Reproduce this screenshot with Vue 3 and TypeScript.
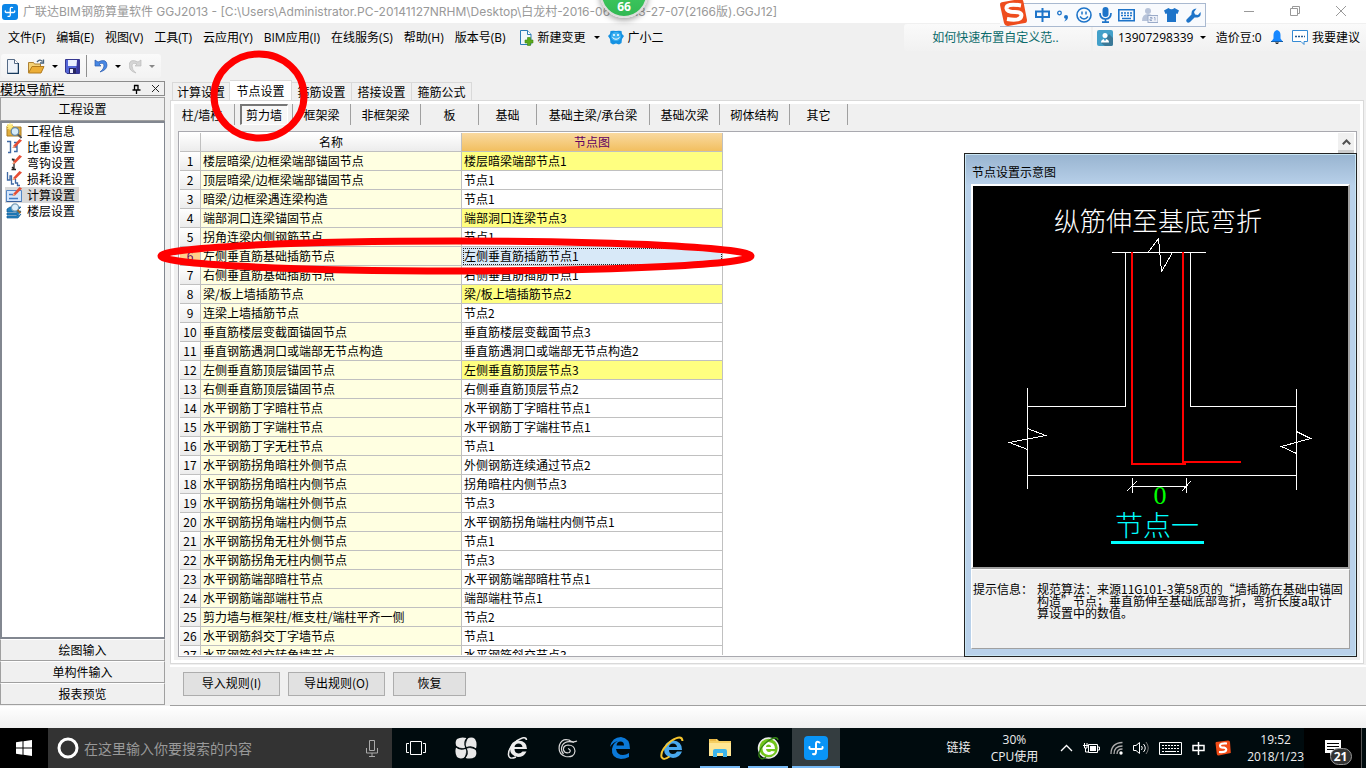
<script setup lang="ts">
import { ref } from 'vue'

interface NodeRow { name: string; node: string; changed?: boolean }

const menus = ['文件(F)', '编辑(E)', '视图(V)', '工具(T)', '云应用(Y)', 'BIM应用(I)', '在线服务(S)', '帮助(H)', '版本号(B)']
const navItems = ['工程信息', '比重设置', '弯钩设置', '损耗设置', '计算设置', '楼层设置']
const navFooter = ['绘图输入', '单构件输入', '报表预览']
const tabs = ['计算设置', '节点设置', '箍筋设置', '搭接设置', '箍筋公式']
const members = [
  { label: '柱/墙柱', size: 'm' }, { label: '剪力墙', size: 's' }, { label: '框架梁', size: 's' },
  { label: '非框架梁', size: 'l' }, { label: '板', size: 's' }, { label: '基础', size: 's' },
  { label: '基础主梁/承台梁', size: 'xl' }, { label: '基础次梁', size: 'l' },
  { label: '砌体结构', size: 'l' }, { label: '其它', size: 's' },
]
const rows: NodeRow[] = [
  { name: '楼层暗梁/边框梁端部锚固节点', node: '楼层暗梁端部节点1', changed: true },
  { name: '顶层暗梁/边框梁端部锚固节点', node: '节点1' },
  { name: '暗梁/边框梁遇连梁构造', node: '节点1' },
  { name: '端部洞口连梁锚固节点', node: '端部洞口连梁节点3', changed: true },
  { name: '拐角连梁内侧钢筋节点', node: '节点1' },
  { name: '左侧垂直筋基础插筋节点', node: '左侧垂直筋插筋节点1' },
  { name: '右侧垂直筋基础插筋节点', node: '右侧垂直筋插筋节点1' },
  { name: '梁/板上墙插筋节点', node: '梁/板上墙插筋节点2', changed: true },
  { name: '连梁上墙插筋节点', node: '节点2' },
  { name: '垂直筋楼层变截面锚固节点', node: '垂直筋楼层变截面节点3' },
  { name: '垂直钢筋遇洞口或端部无节点构造', node: '垂直筋遇洞口或端部无节点构造2' },
  { name: '左侧垂直筋顶层锚固节点', node: '左侧垂直筋顶层节点3', changed: true },
  { name: '右侧垂直筋顶层锚固节点', node: '右侧垂直筋顶层节点2' },
  { name: '水平钢筋丁字暗柱节点', node: '水平钢筋丁字暗柱节点1' },
  { name: '水平钢筋丁字端柱节点', node: '水平钢筋丁字端柱节点1' },
  { name: '水平钢筋丁字无柱节点', node: '节点1' },
  { name: '水平钢筋拐角暗柱外侧节点', node: '外侧钢筋连续通过节点2' },
  { name: '水平钢筋拐角暗柱内侧节点', node: '拐角暗柱内侧节点3' },
  { name: '水平钢筋拐角端柱外侧节点', node: '节点3' },
  { name: '水平钢筋拐角端柱内侧节点', node: '水平钢筋拐角端柱内侧节点1' },
  { name: '水平钢筋拐角无柱外侧节点', node: '节点1' },
  { name: '水平钢筋拐角无柱内侧节点', node: '节点3' },
  { name: '水平钢筋端部暗柱节点', node: '水平钢筋端部暗柱节点1' },
  { name: '水平钢筋端部端柱节点', node: '端部端柱节点1' },
  { name: '剪力墙与框架柱/框支柱/端柱平齐一侧', node: '节点2' },
  { name: '水平钢筋斜交丁字墙节点', node: '节点1' },
  { name: '水平钢筋斜交转角墙节点', node: '水平钢筋斜交节点3' },
]
const activeNav = ref(4)
const activeTab = ref(1)
const activeMember = ref(1)
const activeRow = ref(5)
const query = ref('')
</script>

<template>
  <div class="desktop">
    <header class="titlebar">
      <svg class="app-icon" width="16" height="16" viewBox="0 0 16 16"><rect width="16" height="16" rx="3" fill="#0c86e8" /><path d="M10.500 3.500Q8.300 2.800 8.300 5V10.500Q8.300 13 6 12.300M3.300 7Q3 8.500 4.500 8.500H11.500Q13 8.500 12.700 7" fill="none" stroke="#fff" stroke-width="1.300" stroke-linecap="round" /></svg>
      <h1>广联达BIM钢筋算量软件 GGJ2013 - [C:\Users\Administrator.PC-20141127NRHM\Desktop\白龙村-2016-06-13-13-27-07(2166版).GGJ12]</h1>
      <div class="window-controls">
        <button aria-label="最小化"><svg width="12" height="12"><path d="M1 6.500H11" stroke="#999" /></svg></button>
        <button aria-label="还原"><svg width="12" height="12"><path d="M1.500 3.500h7v7h-7zM3.500 3.500v-2h7v7h-2" fill="none" stroke="#999" /></svg></button>
        <button aria-label="关闭"><svg width="12" height="12"><path d="M1 1L11 11M11 1L1 11" stroke="#999" /></svg></button>
      </div>
    </header>

    <nav class="menubar">
      <button v-for="m in menus" :key="m" class="menu">{{ m }}</button>
      <button class="menu with-icon new-change">
        <svg width="15" height="17" viewBox="0 0 15 17"><path d="M1.500 1.500h7l3.500 4v10H1.500z" fill="#f2f8fc" stroke="#2b7cb8" /><path d="M8.500 1.500v4H12" fill="#fff" stroke="#2b7cb8" /><path d="M8.500 8.500h3v2.500H14v3h-2.500v2.500h-3V14H6v-3h2.500z" fill="#5cab1c" stroke="#3d8710" stroke-width=".6" /></svg>
        新建变更<i class="caret"></i>
      </button>
      <button class="menu with-icon">
        <svg width="16" height="15" viewBox="0 0 16 15"><path d="M2.500 1Q5 .5 8 1 11 .5 13.500 1L14 4 16 6 14 9 13.500 13 11 14.500 8 13.500 5 14.500 2.500 13 2 9 0 6 2 4z" fill="#1692e2" /><ellipse cx="8" cy="6.500" rx="5" ry="4.500" fill="#3fb2f2" /><circle cx="6" cy="5" r="1" fill="#fff" /><circle cx="10" cy="5" r="1" fill="#fff" /><path d="M4.500 7.500q3.500 3.500 7 0" fill="none" stroke="#fff" /></svg>
        广小二
      </button>
      <div class="promo"><a href="#help">如何快速布置自定义范..</a></div>
      <div class="account">
        <button class="user"><svg width="16" height="16" viewBox="0 0 16 16"><rect width="16" height="16" rx="2" fill="#43a0c9" /><path d="M8 10l4-6 4 4v6q0 2-2 2H8l-4-3z" fill="#3b7997" /><circle cx="8" cy="5.500" r="2.500" fill="#fff" /><path d="M4 12.500q0-3.500 4-3.500t4 3.500z" fill="#fff" /><path d="M7 8h2v2l-1 1-1-1z" fill="#43a0c9" /></svg>13907298339<i class="caret"></i></button>
        <span>造价豆:0</span>
        <button aria-label="通知"><svg width="12" height="15" viewBox="0 0 12 15"><path d="M6 0Q9.500 1 9.500 5V8.500L12 12H0L2.500 8.500V5Q2.500 1 6 0z" fill="#1687ff" /><path d="M4 12.500h4q-2 3-4 0" fill="#111" /><path d="M0 11.500H12" stroke="#135da8" /></svg></button>
        <button class="suggest"><svg width="16" height="15" viewBox="0 0 16 15"><path d="M.5.500h15v11h-3.500v3l-3-3H.500z" fill="#fff" stroke="#368bd4" /><path d="M3 6.500H13" stroke="#235a91" stroke-width="1.500" stroke-dasharray="2 1" /></svg>我要建议</button>
      </div>
    </nav>

    <div class="toolbar-row">
      <div class="toolbar">
        <button aria-label="新建"><svg width="12" height="15" viewBox="0 0 12 15"><path d="M.5.500h7l4 4v10H.500z" fill="#eef3fa" stroke="#566b86" /><path d="M7.500.500v4h4" fill="#fff" stroke="#566b86" /><path d="M11.500 4v10.500H.500" fill="none" stroke="#173a5c" stroke-width="1.500" /></svg></button>
        <button class="tool-open" aria-label="打开"><svg width="17" height="15" viewBox="0 0 17 15"><path d="M.5 13.500V3.500h5l1 1.500h6v3" fill="#f5d276" stroke="#ad8135" /><path d="M.5 14l3.500-6.500h12L13 14z" fill="#ecae37" stroke="#b27b1d" /><path d="M9 3q3-3.500 5.500-.5M15.500.500v3.500h-3.500" fill="none" stroke="#48637c" stroke-width="1.300" /></svg><i class="caret"></i></button>
        <button class="tool-save" aria-label="保存"><svg width="15" height="15" viewBox="0 0 15 15"><path d="M.5.500h14v14H2L.5 13z" fill="#5467d8" stroke="#363790" /><path d="M3 1h9v6H3z" fill="#e9f0ff" /><path d="M12 1h2v13h-3z" fill="#37389c" /><path d="M4 9h7v5.500H4z" fill="#272760" /><path d="M5 10h3v4H5z" fill="#eef" /></svg></button>
        <button class="tool-undo" aria-label="撤销"><svg width="14" height="15" viewBox="0 0 14 15"><path d="M1 1v6h6L5 5q5-2 5 2 0 3-4 6 7-2 7-7Q12.500-1 4 3z" fill="#4788e5" stroke="#2859ae" stroke-width=".7" /></svg><i class="caret"></i></button>
        <button aria-label="重做" disabled><svg width="13" height="15" viewBox="0 0 13 15"><path d="M12 1v6H6l2-2Q3 3 3 7q0 4 4 7-7-2-7-8Q1-1 9 3z" fill="#d5d5d5" stroke="#bbb" stroke-width=".7" /></svg><i class="caret dim"></i></button>
      </div>
    </div>

    <div class="workspace">
      <aside class="sidebar">
        <div class="side-head"><h2>模块导航栏</h2>
          <button aria-label="固定"><svg width="9" height="10" viewBox="0 0 9 10"><path d="M2.500 1V5.500M6 1V5.500M2 1.500H6.500M.5 6H8.500M4.500 6V10" fill="none" stroke="#000" stroke-width="1.300" /></svg></button>
          <button aria-label="关闭导航"><svg width="9" height="9" viewBox="0 0 9 9"><path d="M1 1L8 8M8 1L1 8" stroke="#222" /></svg></button>
        </div>
        <button class="side-btn top">工程设置</button>
        <div class="tree">
          <button v-for="(n, i) in navItems" :key="n" class="tree-item" :class="{ on: i === activeNav }" @click="activeNav = i">
            <svg v-if="i === 0" width="16" height="16" viewBox="0 0 16 16"><path d="M1 3h6l1 1h7v9H1z" fill="#e1ae3c" stroke="#a97b22" /><path d="M4 0v7M.5 3.500h7M1.500 1l5 5M6.500 1l-5 5" stroke="#ffea78" stroke-width="1.200" /><circle cx="9" cy="8.500" r="3.800" fill="#d5ebfa" stroke="#6688a4" stroke-width="1.300" /><path d="M12 11.500l3.500 3.500" stroke="#555" stroke-width="2" /></svg>
            <svg v-else-if="i === 1" width="16" height="16" viewBox="0 0 16 16"><path d="M1 2.500H4.500V13.500H2M8 3.500h3v9H8M8.500 8H11" fill="none" stroke="#3f69a4" stroke-width="1.400" /><path d="M6.500 9L7.500 6.500 13.500 0 16 1.500 9 8.500z" fill="#e64d35" /><path d="M6.500 9l1-2.500L9 8z" fill="#f2bf91" /></svg>
            <svg v-else-if="i === 2" width="16" height="16" viewBox="0 0 16 16"><path d="M6 4.500H8V14.500M5.500 14.500H10M6 12L8 14M6.500 3.500v2" fill="none" stroke="#222" stroke-width="1.300" /><path d="M6.500 9L7.500 6.500 13.500 0 16 1.500 9 8.500z" fill="#e64d35" /><path d="M6.500 9l1-2.500L9 8z" fill="#f2bf91" /></svg>
            <svg v-else-if="i === 3" width="16" height="16" viewBox="0 0 16 16"><path d="M1.500 1v8H4V5h1.500v8H8M9.500 8v4h2v2.500H14" fill="none" stroke="#3f69a4" stroke-width="1.300" /><path d="M6.500 9L7.500 6.500 13.500 0 16 1.500 9 8.500z" fill="#e64d35" /><path d="M6.500 9l1-2.500L9 8z" fill="#f2bf91" /></svg>
            <svg v-else-if="i === 4" width="16" height="16" viewBox="0 0 16 16"><path d="M.5 3.500h15v11H.500z" fill="#d4e6fb" stroke="#5587c5" /><path d="M.5 14.500h15" stroke="#365f9c" /><path d="M3 7.500h4M3 11.500h9" stroke="#437cc4" stroke-width="1.500" /><path d="M6.500 9L7.500 6.500 13.500 0 16 1.500 9 8.500z" fill="#e64d35" /><path d="M6.500 9l1-2.500L9 8z" fill="#f2bf91" /></svg>
            <svg v-else width="16" height="16" viewBox="0 0 16 16"><path d="M1 6l3-2h11l-3 3v2l3-1-3 4v1l3-2-3 4H1v-2h10v-1H1v-2h10V9H1z" fill="#2383c2" stroke="#145d97" stroke-width=".7" /><circle cx="9" cy="4.500" r="3.600" fill="#dceffb" stroke="#7b9eb7" stroke-width="1.200" /><path d="M11.500 7l3 3" stroke="#9c672a" stroke-width="2" /></svg>
            <span>{{ n }}</span>
          </button>
        </div>
        <button v-for="n in navFooter" :key="n" class="side-btn">{{ n }}</button>
      </aside>

      <main class="main">
        <div class="tabs" role="tablist">
          <button v-for="(t, i) in tabs" :key="t" role="tab" :aria-selected="i === activeTab" :class="{ on: i === activeTab }" @click="activeTab = i">{{ t }}</button>
        </div>
        <section class="panel">
          <div class="panel-body">
            <div class="members">
              <div v-for="(m, i) in members" :key="m.label" class="member" :class="m.size">
                <button :class="{ on: i === activeMember }" @click="activeMember = i">{{ m.label }}</button>
              </div>
            </div>
            <div class="grid-frame">
              <div class="grid-scroll">
                <table>
                  <colgroup><col class="c-num"><col class="c-text"><col class="c-text"></colgroup>
                  <thead><tr><th></th><th>名称</th><th class="current">节点图</th></tr></thead>
                  <tbody>
                    <tr v-for="(r, i) in rows" :key="i" @click="activeRow = i">
                      <th scope="row" :class="{ current: i === activeRow }">{{ i + 1 }}</th>
                      <td class="name">{{ r.name }}</td>
                      <td :class="{ changed: r.changed, selected: i === activeRow }">{{ r.node }}</td>
                    </tr>
                  </tbody>
                </table>
              </div>
              <div class="scrollbar"><button aria-label="向上滚动"><svg width="9" height="6" viewBox="0 0 9 6"><path d="M.8 5.200L4.500 1.500 8.200 5.200" fill="none" stroke="#505050" stroke-width="2" /></svg></button></div>

              <section class="preview">
                <h3>节点设置示意图</h3>
                <div class="drawing">
                  <svg viewBox="0 0 373 381" role="img" aria-label="节点一">
                    <g fill="none" stroke="#fff" shape-rendering="crispEdges">
                      <path d="M138 66.500H232M174 66.500L184.500 52.500 187.500 85.500 198.500 66.500M151.500 66.500V220.500H53.500M216.500 66.500V220.500H322.500M53.500 202V303M322.500 203V304M53.500 289.500H322.500" />
                      <path d="M53.500 242.500L71.500 249.500 35.500 256.500 53.500 263.500M322.500 245.500L336.500 252.500 307.500 260.500 322.500 267.500" />
                      <path d="M158.500 292V307M212.500 292V307M158.500 300.500H212.500M152.500 305.500L162.500 295.500M207.500 305.500L216.500 295.500" />
                    </g>
                    <path d="M158 66V278H212M209 66V276H267" fill="none" stroke="#f00" stroke-width="2" />
                    <text x="184" y="45" class="cad white">纵筋伸至基底弯折</text>
                    <text x="186" y="318" class="cad green">0</text>
                    <text x="183" y="350" class="cad cyan">节点一</text>
                    <path d="M137 356.500H230" stroke="#0ff" stroke-width="3" />
                  </svg>
                </div>
                <div class="tip">
                  <span class="tip-label">提示信息：</span>
                  <p>规范算法：来源11G101-3第58页的“墙插筋在基础中锚固<br>构造”节点；垂直筋伸至基础底部弯折，弯折长度a取计<br>算设置中的数值。</p>
                </div>
              </section>
            </div>
          </div>
        </section>
        <div class="actions">
          <button>导入规则(I)</button><button>导出规则(O)</button><button class="short">恢复</button>
        </div>
      </main>
    </div>

    <div class="status-gap"></div>

    <footer class="taskbar">
      <button class="start" aria-label="开始"><svg width="16" height="16" viewBox="0 0 16 16"><path d="M0 2.200L6.500 1.300V7.500H0zM7.500 1.200L16 0V7.500H7.500zM0 8.500H6.500V14.700L0 13.800zM7.500 8.500H16V16L7.500 14.800z" fill="#fff" /></svg></button>
      <div class="search">
        <svg width="22" height="22" viewBox="0 0 22 22"><circle cx="11" cy="11" r="9" fill="none" stroke="#fff" stroke-width="3" /></svg>
        <input v-model="query" type="text" aria-label="搜索" placeholder="在这里输入你要搜索的内容">
        <svg width="12" height="17" viewBox="0 0 12 17"><path d="M3.500.500h5v10h-5zM.5 8v5H11.500V8M6 13v3.500M3 16.500H9" fill="none" stroke="#aaa" /></svg>
      </div>
      <div class="apps">
        <button class="std" aria-label="任务视图"><svg width="20" height="14" viewBox="0 0 20 14"><path d="M4.500.500h11v13h-11zM3 2.500H.500v9H3M17 2.500h2.500v9H17" fill="none" stroke="#fff" /></svg></button>
        <button class="mid" aria-label="风扇"><svg width="22" height="22" viewBox="0 0 22 22"><g fill="#e9e9e9"><path d="M11 10.500Q9.500 5 11.500 1 6-.5 2 2-.5 5 1.500 9.500 6 12 11 10.500z" /><path d="M11.500 11Q17 9.500 21 11.500 22.500 6 20 2 17-.5 12.500 1.500 10 6 11.500 11z" /><path d="M11 11.500Q12.500 17 10.500 21 16 22.500 20 20 22.500 17 20.500 12.500 16 10 11 11.500z" /><path d="M10.500 11Q5 12.500 1 10.500-.5 16 2 20 5 22.500 9.500 20.500 12 16 10.500 11z" /></g><path d="M11 11Q8 5 12.500 1M11 11Q17 8 21 12.500M11 11Q14 17 9.500 21M11 11Q5 14 1 9.500" fill="none" stroke="#000b0e" stroke-width="1.200" /></svg></button>
        <button class="mid" aria-label="浏览器"><svg width="22" height="24" viewBox="0 0 22 24"><path d="M19.500 15.500Q17 21 11 21 3 20 3 12.500 4 5 11.500 4.500 20 5 20 13H7.500M7.500 11Q8 7.500 11.500 7.500T15.500 11zM7.500 13q0 4 4 4.500 2.500 0 4-2h4" fill="#eee" fill-rule="evenodd" /><path d="M19.500 4Q19-1 9.500 5 1 12 1.500 19q.5 5 7.500 2" fill="none" stroke="#eee" stroke-width="1.500" /></svg></button>
        <button class="std" aria-label="搜索引擎"><svg width="20" height="20" viewBox="0 0 20 20"><path d="M19 3Q14 5 11 2 4 0 1.500 7q-2 9 6 11.500 9 1.500 9.500-5.500-.5-6-7-6-5 .5-4.500 5 1.500 4 6 2.500 2-2.500-1.500-4M16 4.500Q8 2 4.500 7 2 12 5.500 16" fill="none" stroke="#d9d9d9" stroke-width="1.200" /></svg></button>
        <button class="wide" aria-label="Edge"><svg width="20" height="22" viewBox="0 0 20 22"><path d="M0 10Q2 0 11 0q9 1 9 12H6q1 6 7 6 3 0 6-2v4q-4 2-8 2Q1 21 2 12 3 6 8 4 3 5 0 10zM6.500 8.500H14Q14 4.500 10.500 4.500T6.500 8.500z" fill="#0b79d8" fill-rule="evenodd" /></svg></button>
        <button class="std" aria-label="Internet Explorer"><svg width="24" height="24" viewBox="0 0 24 24"><path d="M22 15.500Q19.500 22 13 22 4 21 4 13 5 5 13 4.500 22 5 22 14H9Q9 18 13 18q2.500 0 4-2.500zM9 11h8q-.5-3.500-4-3.500T9 11z" fill="#48a8ed" fill-rule="evenodd" /><path d="M22.500 5Q22-2 11 5 0 14 1.500 21q2 4 8-.5" fill="none" stroke="#f5c52e" stroke-width="2" /></svg></button>
        <button class="open" aria-label="文件资源管理器"><svg width="22" height="18" viewBox="0 0 22 18"><path d="M0 0h8l2 2h12v15H0z" fill="#f6cf62" /><path d="M0 4h22v13H0z" fill="#ffe694" /><path d="M1 1h6" stroke="#dc9d24" /><path d="M4 18v-6q0-2 2-2h10q2 0 2 2v6h-4v-4H8v4z" fill="#3db5eb" /></svg></button>
        <button class="open" aria-label="360浏览器"><svg width="23" height="24" viewBox="0 0 23 24"><circle cx="11.500" cy="12" r="10" fill="#72c51c" stroke="#eee" stroke-width="1.500" /><path d="M18 15.500Q16 19 11.500 19 5.500 18 5.500 12.500T11.500 6Q18 6.500 18 13H9q.5 3 3 3 1.500 0 2.500-1zM9 11h5q0-2.500-2.500-2.500T9 11z" fill="#fff" fill-rule="evenodd" /><path d="M21 4Q20-1 11 5 1 13 2 20q2 5 7 1" fill="none" stroke="#338413" stroke-width="1.300" /></svg></button>
        <button class="open active" aria-label="广联达"><svg width="24" height="24" viewBox="0 0 24 24"><rect width="24" height="24" rx="4" fill="#0994f6" /><path d="M15.500 6.500Q12 4.500 12 8V15.500Q12 19 9 18M5.500 11Q5 13 7 13H17Q19 13 18.500 11" fill="none" stroke="#fff" stroke-width="2" stroke-linecap="round" /></svg></button>
      </div>
      <div class="tray">
        <span class="link">链接</span>
        <span class="two">30%<br>CPU使用</span>
        <svg width="13" height="8" viewBox="0 0 13 8"><path d="M1 7L6.500 1.500 12 7" fill="none" stroke="#fff" stroke-width="1.300" /></svg>
        <svg width="17" height="12" viewBox="0 0 17 12"><path d="M5.500 2.500h9v8h-9zM14.500 5h2v3h-2M0 3.500h5M1.500 1v5H4V1M2.500 6v4h3" fill="none" stroke="#fff" /><path d="M7 4h6v5H7z" fill="#fff" /></svg>
        <svg width="13" height="14" viewBox="0 0 13 14"><path d="M1 13Q1 2 12.500 1.500M4 13q0-8 8.500-8M7 13q0-5 5.500-5" fill="none" stroke="#aaa" stroke-width="1.300" /><circle cx="11" cy="12" r="1.700" fill="#fff" /></svg>
        <svg width="16" height="14" viewBox="0 0 16 14"><path d="M.5 4.500H3L6.500 1.500v11L3 9.500H.500zM8.500 5q1.500 2 0 4M10.500 3q3.500 4 0 8" fill="none" stroke="#fff" /><path d="M13 1q4.500 6 0 12" fill="none" stroke="#777" /></svg>
        <svg width="23" height="13" viewBox="0 0 23 13"><path d="M.5.500h22v12H.500z" fill="none" stroke="#fff" /><path d="M3 3.500H20M3 6.500H20" stroke="#fff" stroke-dasharray="2 1" /><path d="M3 9.500h2M6 9.500h11M18 9.500h2" stroke="#fff" /></svg>
        <svg width="13" height="13" viewBox="0 0 13 13"><path d="M1 3.500H12V8.500H1zM6.500 0V13" fill="none" stroke="#fff" stroke-width="1.500" /></svg>
        <svg width="16" height="16" viewBox="0 0 16 16"><path d="M1 2L13 .5Q15 .5 15 2l.8 11-12 2.500Q2 15.500 1.800 14L.5 3z" fill="#f04b16" /><path d="M12 3.500Q5 3 5 5.500T9 7.500q3 1 2 3T4 12" fill="none" stroke="#fff" stroke-width="2.200" /></svg>
        <span class="two clock">19:52<br>2018/1/23</span>
      </div>
      <button class="notice" aria-label="21条通知"><svg width="17" height="17" viewBox="0 0 17 17"><path d="M0 0h16v13H8l-3 3v-3H0z" fill="#fff" /><path d="M2 3.500h12M2 6.500h12M2 9.500h7" stroke="#000" /></svg><span>21</span></button>
    </footer>

    <div class="speed-ball"><span>66</span></div>
    <div class="ime">
      <svg class="ime-logo" width="28" height="28" viewBox="0 0 28 28"><path d="M0 6Q0 3 3 3L20 0q3 0 3.500 3L27 21q0 3-2 3L8 27q-3 0-4-3z" fill="#ee4c1d" /><path d="M21 6.500Q6 4 6.500 9.500 7 13 15 13t6 5q-2 4-14 2" fill="none" stroke="#fff" stroke-width="4" /></svg>
      <svg width="15" height="14" viewBox="0 0 15 14"><path d="M1 3.500H14V9H1zM7.500 0V14" fill="none" stroke="#1e74c9" stroke-width="2" /></svg>
      <svg width="13" height="13" viewBox="0 0 13 13"><circle cx="3.500" cy="4" r="1.800" fill="none" stroke="#1e74c9" stroke-width="1.300" /><path d="M8 8q0-2 2-2t2 2q0 3-4 4.500 2-1.500 1.500-3Q8 9.500 8 8" fill="#1e74c9" /></svg>
      <svg width="16" height="16" viewBox="0 0 16 16"><circle cx="8" cy="8" r="7" fill="none" stroke="#1e74c9" stroke-width="1.600" /><path d="M6 4.500v3M10 4.500v3M4 9.500q4 5 8 0" fill="none" stroke="#1e74c9" stroke-width="1.500" /></svg>
      <svg width="13" height="16" viewBox="0 0 13 16"><rect x="3.500" y="0" width="6" height="10" rx="3" fill="#1e74c9" /><path d="M1 6q0 6 5.500 6T12 6M6.500 12v3M3 15.200h7" fill="none" stroke="#1e74c9" stroke-width="1.700" /></svg>
      <svg width="17" height="13" viewBox="0 0 17 13"><path d="M.8.800h15.400v11H.8z" fill="none" stroke="#1e74c9" stroke-width="1.600" /><path d="M3 4h11M3 6.500h11" stroke="#1e74c9" stroke-width="1.500" stroke-dasharray="2 1" /><path d="M4 9.500h9" stroke="#1e74c9" stroke-width="1.500" /></svg>
      <svg width="16" height="16" viewBox="0 0 16 16"><circle cx="6" cy="4" r="3" fill="#b7c3d9" /><path d="M0 14q0-7 6-7 3 0 5 2v5z" fill="#b7c3d9" /><rect x="6" y="8.500" width="10" height="7" fill="#eef1f8" stroke="#9aabc9" /><path d="M8 10.500h2v1.500H8v1.500h2M12 10.500h1v3" fill="none" stroke="#9aabc9" /></svg>
      <svg width="15" height="14" viewBox="0 0 15 14"><path d="M4.500 0Q7.500 2.500 10.500 0L15 2.500 13.500 6 12 5.500V14H3V5.500L1.500 6 0 2.500z" fill="#1e74c9" /></svg>
      <svg width="15" height="15" viewBox="0 0 15 15"><path d="M10.500.500L8 4l1 2.500 3 .5L14.500 4Q15.500 8.500 11.500 9.500H8.500L4 14Q2 15.500.8 14T1 11L5.500 6.500Q5 1 10.500.500" fill="#1e74c9" /></svg>
    </div>
    <svg class="mark ring" width="98" height="92" viewBox="0 0 98 92" aria-hidden="true"><ellipse cx="49" cy="46" rx="45" ry="42" fill="none" stroke="#f00" stroke-width="7" /></svg>
    <svg class="mark oval" width="600" height="40" viewBox="0 0 600 40" aria-hidden="true"><ellipse cx="299" cy="20" rx="295" ry="15" fill="none" stroke="#f00" stroke-width="7" /></svg>
  </div>
</template>

<style>
html, body { margin: 0; background: #f0f0f0; }
</style>

<style scoped>
.desktop { position: relative; display: flex; flex-direction: column; height: 100vh; min-height: 480px; overflow: hidden; background: #f0f0f0; color: #000; font: 12px/16px "Noto Sans CJK SC", sans-serif; }
.desktop * { box-sizing: border-box; }
button { display: flex; align-items: center; justify-content: center; margin: 0; padding: 0; border: 0; background: none; color: inherit; font: inherit; white-space: nowrap; }
svg { display: block; flex: none; }
h1, h2, h3, p { margin: 0; font: inherit; }
.caret { width: 0; height: 0; border: 3px solid transparent; border-top-color: #000; border-bottom-width: 0; }
.caret.dim { border-top-color: #888; }

.titlebar { display: flex; align-items: center; flex: none; height: 23px; padding-left: 2px; background: #fff; color: #999; font-family: Inter, "Noto Sans CJK SC", sans-serif; }
.titlebar h1 { flex: 1; margin-left: 5px; white-space: nowrap; }
.window-controls { display: flex; gap: 34px; padding: 0 19px 2px 0; }

.menubar { display: flex; align-items: center; flex: none; gap: 1px; height: 29px; padding-left: 3px; font-family: "Open Sans", "Noto Sans CJK SC", sans-serif; }
.menu { padding: 0 5px; }
.with-icon { gap: 4px; }
.with-icon .caret { margin-left: 4px; }
.new-change { margin-left: 2px; padding-right: 2px; }
.promo, .account { height: 27px; background: linear-gradient(#fafafa, #f1f1f1); }
.promo { display: flex; align-items: center; justify-content: center; width: 187px; margin: 0 1px 0 auto; padding-right: 4px; border-radius: 3px 0 0 3px; }
.promo a { color: #0b6b6b; text-decoration: none; }
.account { display: flex; align-items: center; justify-content: space-between; width: 273px; padding: 0 6px 0 4px; }
.user { gap: 5px; }
.user .caret { margin-left: 2px; }
.suggest { gap: 4px; }

.toolbar-row { flex: none; height: 28px; padding: 2px 0 2px 1px; }
.toolbar { display: flex; align-items: center; width: 160px; height: 24px; padding-left: 6px; border-radius: 3px; background: linear-gradient(#fafafa, #f3f3f3); }
.toolbar button { gap: 7px; }
.tool-open { margin-left: 9px; }
.tool-save { margin-left: 7px; }
.toolbar .tool-undo { height: 22px; margin: 0 8px 0 6px; padding-left: 7px; border-left: 1px solid #8f8f8f; }

.workspace { display: flex; flex: 1; min-height: 0; }
.sidebar { display: flex; flex-direction: column; flex: none; width: 165px; padding: 1px 0; }
.side-head { display: flex; align-items: center; flex: none; gap: 10px; height: 15px; margin-bottom: 1px; padding-right: 4px; border: 1px solid #8c8c8c; border-left: 0; font-size: 13px; }
.side-head h2 { flex: 1; line-height: 13px; }
.side-btn { flex: none; height: 22px; border: 1px solid #a0a0a0; border-top-color: #fff; background: #f0f0f0; }
.side-btn.top { height: 24px; border-top-color: #a0a0a0; }
.tree { flex: 1; min-height: 0; padding: 0 3px; border: 2px solid #828790; border-right-width: 1px; background: #fff; overflow: hidden; }
.tree-item { gap: 5px; height: 16px; padding: 0 4px 0 1px; }
.tree-item.on { background: #d9d9d9; }

.main { display: flex; flex-direction: column; flex: 1; min-width: 0; margin-left: 5px; }
.tabs { display: flex; align-items: flex-end; flex: none; height: 20px; padding-left: 2px; }
.tabs button { width: 60px; height: 18px; border: 1px solid #d9d9d9; border-bottom: 0; border-left-width: 0; background: #f0f0f0; }
.tabs button:first-child { width: 58px; border-left-width: 1px; }
.tabs button.on { width: 62px; height: 20px; background: #fff; }
.panel { display: flex; flex: 1; min-height: 0; margin-right: 2px; padding: 3px; border: 1px solid #d9d9d9; background: #fff; }
.panel-body { display: flex; flex-direction: column; flex: 1; min-width: 0; padding: 0 3px 3px 4px; background: #f0f0f0; }
.members { display: flex; flex: none; height: 21px; margin-bottom: 6px; }
.member { display: flex; align-items: stretch; justify-content: center; width: 58px; border-right: 1px solid #a0a0a0; }
.member.m { width: 57px; padding-right: 8px; }
.member.l { width: 70px; }
.member.xl { width: 113px; }
.member .on { width: 48px; border: 1px solid #fff; border-top: 2px solid #777; border-left: 2px solid #777; background: #f7f7f7; }
.grid-frame { position: relative; display: flex; flex: 1; min-height: 0; padding: 1px; border: 1px solid #a9a9af; background: #fff; }
.grid-scroll { flex: 1; min-width: 0; overflow: hidden; }
table { width: 543px; border-collapse: separate; border-spacing: 0; table-layout: fixed; }
.c-num { width: 21px; }
.c-text { width: 261px; }
th, td { height: 19px; padding: 1px 2px; border: 0 solid #c0c0c0; border-width: 0 1px 1px 0; line-height: 16px; font-weight: 400; white-space: nowrap; overflow: hidden; }
th { padding: 1px 0; background: linear-gradient(#fff, #ececec); text-align: center; }
thead .current { background: linear-gradient(#f9d9a0, #f2bf5f); color: #600060; }
tbody .current { background: #ffcf8c; color: #600060; }
td.name { background: #ffffe1; }
td.changed { background: #ffff80; }
td.selected { background: #d8e9f8; outline: 1px dotted #222; outline-offset: -2px; }
.scrollbar { width: 16px; margin-right: 1px; background: linear-gradient(#f0f0f0 17px, #cdcdcd 17px); }
.scrollbar button { width: 16px; height: 17px; }

.preview { position: absolute; right: -1px; top: 21px; bottom: -1px; display: flex; flex-direction: column; width: 393px; padding: 0 6px 7px; border: 1px solid #222; box-shadow: inset 0 0 0 1px #c9e6f4; background: linear-gradient(#98b4d0, #b9d1ea 32px, #b9d1ea); }
.preview h3 { height: 30px; padding: 10px 0 0 1px; }
.drawing { flex: 1; min-height: 0; border: 2px solid #fff; border-right-color: #a0a0a0; border-bottom-color: #a0a0a0; background: #000; }
.drawing svg { width: 100%; height: 100%; }
.cad { text-anchor: middle; font: 300 26px "Noto Sans CJK SC", sans-serif; }
.white { fill: #fff; }
.green { fill: #0f0; font-family: "Liberation Serif", serif; }
.cyan { fill: #0ff; font-size: 28px; }
.tip { display: flex; flex: none; height: 80px; padding: 13px 0 0 1px; border: 1px solid #a0a0a0; border-top: 1px solid #fff; border-left-color: #fff; background: #f0f0f0; line-height: 12px; white-space: nowrap; }
.tip-label { width: 64px; }

.actions { display: flex; align-items: center; flex: none; gap: 8px; height: 41px; margin-top: 1px; padding: 0 13px 4px; border-top: 2px solid #fff; border-bottom: 1px solid #a0a0a0; }
.actions button { width: 97px; height: 24px; padding-bottom: 2px; border: 1px solid #adadad; background: #e1e1e1; }
.actions .short { width: 73px; }
.status-gap { flex: none; height: 22px; background: linear-gradient(#fff, #f0f0f0); }

.taskbar { display: flex; flex: none; height: 40px; background: #000b0e; color: #eee; font-family: "Open Sans", "Noto Sans CJK SC", sans-serif; }
.start { width: 48px; background: #000; }
.search { display: flex; align-items: center; width: 344px; padding: 0 14px 0 9px; background: #333; }
.search input { flex: 1; min-width: 0; padding: 0 5px; border: 0; outline: 0; background: none; color: #fff; font: 14px/20px "Noto Sans CJK SC", sans-serif; }
.search input::placeholder { color: #999; opacity: 1; }
.apps { display: flex; }
.apps .std { width: 48px; }
.apps .mid { width: 52px; }
.apps .wide { width: 56px; }
.apps .open { width: 40px; margin: 0 4px; padding-top: 2px; border-bottom: 2px solid #76b9f5; }
.apps .active { width: 48px; margin: 0; background: #343d40; }
.tray { display: flex; align-items: center; gap: 10px; margin-left: auto; }
.two { line-height: 17px; text-align: center; }
.link { margin-right: 10px; }
.two + svg { margin-left: 12px; }
.clock { margin-left: 6px; }
.notice { width: 58px; background: #000; border-right: 1px solid #555; margin: 0 4px 0 0; padding-left: 11px; }
.notice span { width: 22px; height: 17px; margin: 16px 0 0 -12px; border: 1px solid #999; border-radius: 9px; background: #333; color: #fff; font-weight: 700; line-height: 15px; }

.speed-ball { position: absolute; left: 600px; top: -30px; display: flex; align-items: flex-end; justify-content: center; width: 48px; height: 48px; padding-bottom: 1px; border: 2px solid #ddd; border-radius: 50%; background: linear-gradient(#49d569, #31b853); box-shadow: 0 2px 6px #0006; color: #fff; font: 700 12px/16px "Open Sans", sans-serif; }
.ime { position: absolute; right: 160px; top: 3px; display: flex; align-items: center; justify-content: space-between; width: 206px; height: 24px; padding-right: 4px; border: 1px solid #a9b9d0; border-left: 0; background: #f8fafd; }
.ime-logo { margin: -4px 0 0; }
.mark { position: absolute; pointer-events: none; }
.ring { left: 210px; top: 50px; }
.oval { left: 157px; top: 236px; }
</style>
